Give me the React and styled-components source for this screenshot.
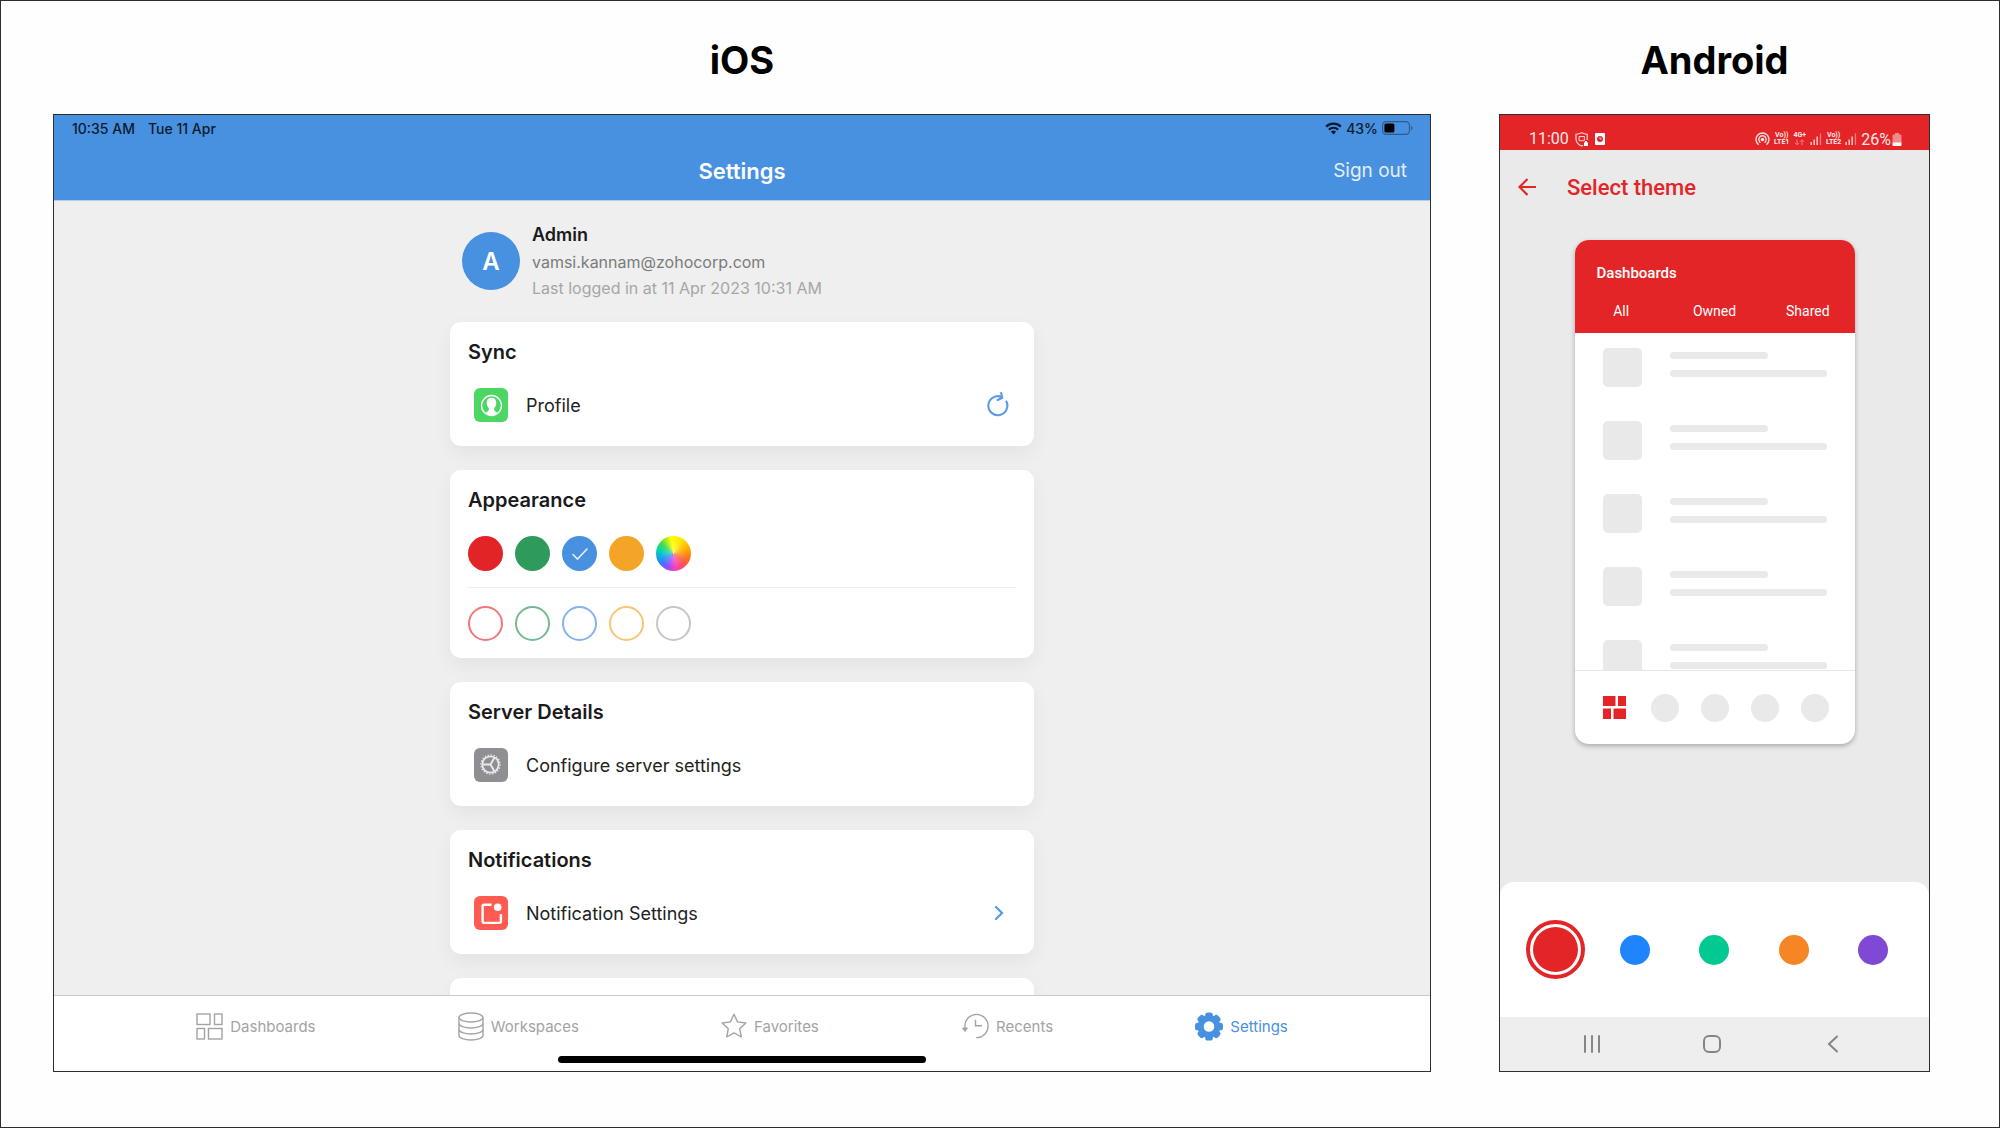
import React, { useState } from 'react'
import styled, { createGlobalStyle } from 'styled-components'

const colors = {
  frame: `#2e2e30`,
  blue: `#4890e0`,
  iosBody: `#efefef`,
  red: `#e32527`,
  androidBody: `#eaeaea`,
  skeleton: `#e9e9e9`,
  ink: `#1a1a1c`,
  muted: `#a3a3a3`,
}

const swatches = [
  { name: `Red`, value: `#e32427` },
  { name: `Green`, value: `#2e9a5c` },
  { name: `Blue`, value: `#4890e0` },
  { name: `Orange`, value: `#f4a527` },
  {
    name: `Multicolor`,
    value: `radial-gradient(circle, rgba(255, 255, 255, 0.35), transparent 55%), conic-gradient(#fffb00, #ffe600 30deg, #ff9500 85deg, #ff5a3c 125deg, #ff3fb4 170deg, #8a4fff 205deg, #1e8bff 240deg, #00d2b4 280deg, #3ddc4a 310deg, #fffb00 350deg)`,
  },
]

const outlines = [
  { name: `Red outline`, value: `#f0787a` },
  { name: `Green outline`, value: `#74b992` },
  { name: `Blue outline`, value: `#84b3ee` },
  { name: `Orange outline`, value: `#f8c476` },
  { name: `Grey outline`, value: `#c6c6c6` },
]

const androidThemes = [
  { name: `Red`, value: colors.red },
  { name: `Blue`, value: `#1f85ff` },
  { name: `Green`, value: `#02c892` },
  { name: `Orange`, value: `#f58525` },
  { name: `Purple`, value: `#7f49d6` },
]

export default function App() {
  return (
    <Page>
      <GlobalStyle />
      <Device>
        <Heading>iOS</Heading>
        <IosSettings />
      </Device>
      <Device>
        <Heading>Android</Heading>
        <AndroidThemes />
      </Device>
    </Page>
  )
}

function IosSettings() {
  const [theme, setTheme] = useState(`Blue`)
  const [tab, setTab] = useState(`Settings`)

  return (
    <Screen>
      <IosHeader>
        <IosStatus>
          <StatusGroup>
            <span>10:35 AM</span>
            <span>Tue 11 Apr</span>
          </StatusGroup>
          <StatusGroup tight>
            <WifiIcon />
            <span>43%</span>
            <IosBattery />
          </StatusGroup>
        </IosStatus>
        <IosNav>
          <IosTitle>Settings</IosTitle>
          <SignOut type='button'>Sign out</SignOut>
        </IosNav>
      </IosHeader>
      <IosBody>
        <Column>
          <Profile>
            <Avatar>A</Avatar>
            <div>
              <ProfileName>Admin</ProfileName>
              <ProfileMail>vamsi.kannam@zohocorp.com</ProfileMail>
              <ProfileLogin>Last logged in at 11 Apr 2023 10:31 AM</ProfileLogin>
            </div>
          </Profile>
          <Cards>
            <Card>
              <CardTitle>Sync</CardTitle>
              <Row type='button'>
                <ProfileIcon />
                <RowLabel>Profile</RowLabel>
                <RefreshIcon />
              </Row>
            </Card>
            <Card short>
              <CardTitle>Appearance</CardTitle>
              <SwatchRow>
                {swatches.map(({ name, value }) => (
                  <Swatch key={name}>
                    <SwatchInput
                      type='radio'
                      name='ios-theme'
                      aria-label={name}
                      fill={value}
                      checked={theme === name}
                      onChange={() => setTheme(name)}
                    />
                    {theme === name && <CheckIcon />}
                  </Swatch>
                ))}
              </SwatchRow>
              <Divider />
              <SwatchRow outlined>
                {outlines.map(({ name, value }) => (
                  <Swatch key={name}>
                    <SwatchInput
                      type='radio'
                      name='ios-theme'
                      aria-label={name}
                      outline={value}
                      checked={theme === name}
                      onChange={() => setTheme(name)}
                    />
                  </Swatch>
                ))}
              </SwatchRow>
            </Card>
            <Card>
              <CardTitle>Server Details</CardTitle>
              <Row type='button'>
                <ServerIcon />
                <RowLabel>Configure server settings</RowLabel>
              </Row>
            </Card>
            <Card>
              <CardTitle>Notifications</CardTitle>
              <Row type='button'>
                <NotificationIcon />
                <RowLabel>Notification Settings</RowLabel>
                <ChevronIcon />
              </Row>
            </Card>
            <Card />
          </Cards>
        </Column>
      </IosBody>
      <TabBar>
        <Tabs>
          {iosTabs.map(({ name, Icon }) => (
            <Tab
              key={name}
              type='button'
              active={tab === name}
              onClick={() => setTab(name)}
            >
              <Icon />
              {name}
            </Tab>
          ))}
        </Tabs>
        <HomeIndicator />
      </TabBar>
    </Screen>
  )
}

function AndroidThemes() {
  const [accent, setAccent] = useState(colors.red)

  return (
    <AndroidScreen>
      <AndroidStatus accent={accent}>
        <AndroidGroup>
          <Clock>11:00</Clock>
          <ShieldIcon />
          <AlarmIcon accent={accent} />
        </AndroidGroup>
        <AndroidGroup tight>
          <HotspotIcon />
          <Carrier>
            <span>Vo))</span>
            <span>LTE1</span>
          </Carrier>
          <Carrier>
            <span>4G+</span>
            <DataArrows />
          </Carrier>
          <SignalIcon />
          <Carrier>
            <span>Vo))</span>
            <span>LTE2</span>
          </Carrier>
          <SignalIcon />
          <Charge>
            26%
            <AndroidBattery />
          </Charge>
        </AndroidGroup>
      </AndroidStatus>
      <AppBar accent={accent}>
        <BackButton type='button' aria-label='Back'>
          <ArrowIcon />
        </BackButton>
        <AppBarTitle>Select theme</AppBarTitle>
      </AppBar>
      <PreviewArea>
        <Preview>
          <PreviewHeader accent={accent}>
            <PreviewTitle>Dashboards</PreviewTitle>
            <PreviewTabs>
              <span>All</span>
              <span>Owned</span>
              <span>Shared</span>
            </PreviewTabs>
          </PreviewHeader>
          <PreviewList>
            {[1, 2, 3, 4, 5].map(n => (
              <PreviewItem key={n}>
                <Thumb />
                <Lines>
                  <Line width={98} />
                  <Line width={157} />
                </Lines>
              </PreviewItem>
            ))}
          </PreviewList>
          <PreviewNav>
            <GridIcon accent={accent} />
            <Dot />
            <Dot />
            <Dot />
            <Dot />
          </PreviewNav>
        </Preview>
      </PreviewArea>
      <Sheet>
        {androidThemes.map(({ name, value }) => (
          <ThemeInput
            key={name}
            type='radio'
            name='android-theme'
            aria-label={name}
            tone={value}
            checked={accent === value}
            onChange={() => setAccent(value)}
          />
        ))}
      </Sheet>
      <SystemNav>
        <SystemButton type='button' aria-label='Recent apps'>
          <svg width='18' height='18' viewBox='0 0 18 18'>
            <path
              d='M2 1v16M9 1v16M16 1v16'
              stroke='#858585'
              strokeWidth='2'
              strokeLinecap='round'
            />
          </svg>
        </SystemButton>
        <SystemButton type='button' aria-label='Home'>
          <svg width='20' height='20' viewBox='0 0 20 20'>
            <rect
              x='2'
              y='2'
              width='16'
              height='16'
              rx='5'
              fill='none'
              stroke='#858585'
              strokeWidth='2'
            />
          </svg>
        </SystemButton>
        <SystemButton type='button' aria-label='Back'>
          <svg width='12' height='18' viewBox='0 0 12 18'>
            <path
              d='M10 1.5L2 9l8 7.5'
              fill='none'
              stroke='#858585'
              strokeWidth='2'
              strokeLinecap='round'
            />
          </svg>
        </SystemButton>
      </SystemNav>
    </AndroidScreen>
  )
}

const WifiIcon = () => (
  <svg width='17' height='13' viewBox='0 0 17 13'>
    <g fill='none' stroke='#0d1c2c' strokeWidth='2.2'>
      <path d='M1.2 4.6a10.4 10.4 0 0 1 14.6 0' />
      <path d='M3.9 7.6a6.6 6.6 0 0 1 9.2 0' />
    </g>
    <path d='M8.5 12.6L5.9 9.8a3.8 3.8 0 0 1 5.2 0z' fill='#0d1c2c' />
  </svg>
)

const IosBattery = () => (
  <svg width='31' height='14' viewBox='0 0 31 14'>
    <rect
      x='0.6'
      y='0.6'
      width='26.8'
      height='12.8'
      rx='3.6'
      fill='none'
      stroke='#2d5a8c'
      strokeWidth='1.1'
    />
    <rect x='2.4' y='2.4' width='10' height='9.2' rx='1.6' fill='#000' />
    <path d='M29 4.8v4.6c1-.5 1.5-1.3 1.5-2.3S30 5.3 29 4.8z' fill='#2d5a8c' />
  </svg>
)

const ProfileIcon = () => (
  <svg width='34' height='34' viewBox='0 0 34 34'>
    <rect width='34' height='34' rx='6' fill='#4cd764' />
    <circle
      cx='17.5'
      cy='17.5'
      r='10'
      fill='none'
      stroke='#fff'
      strokeWidth='1.3'
    />
    <path
      d='M17.500 9.8c-3 0-4.800 2-4.800 4.900 0 2.700 1.100 4 1.900 5.300.6 1.100.3 2.500-.6 3.300-.7.6-1.700 1-2.300 1.500 1.500 1.500 3.600 2.300 5.800 2.300s4.300-.8 5.800-2.300c-.6-.5-1.600-.9-2.300-1.500-.9-.8-1.200-2.200-.6-3.300.8-1.300 1.900-2.600 1.900-5.300 0-2.900-1.800-4.900-4.800-4.900z'
      fill='#fff'
    />
  </svg>
)

const ServerIcon = () => (
  <svg width='34' height='34' viewBox='0 0 34 34'>
    <rect width='34' height='34' rx='6' fill='#8e8e93' />
    <g fill='none' stroke='#e9e9eb'>
      <circle cx='16.5' cy='16.5' r='8.2' strokeWidth='1.8' />
      <circle
        cx='16.5'
        cy='16.5'
        r='9.6'
        strokeWidth='1.2'
        strokeDasharray='1.4 1.6'
      />
      <path
        d='M8.5 16.5h8M16.5 16.5l4-7M16.5 16.5l4 7'
        strokeWidth='1.9'
      />
    </g>
  </svg>
)

const NotificationIcon = () => (
  <svg width='34' height='34' viewBox='0 0 34 34'>
    <rect width='34' height='34' rx='6' fill='#ff5b52' />
    <path
      d='M17.500 8.700H10a1.400 1.400 0 0 0-1.400 1.400V25.500a1.400 1.400 0 0 0 1.400 1.400H25.500a1.400 1.400 0 0 0 1.400-1.400V18'
      fill='none'
      stroke='#fff'
      strokeWidth='2.4'
    />
    <circle cx='23.7' cy='11.2' r='3.8' fill='#fff' />
  </svg>
)

const RefreshIcon = () => (
  <svg width='24' height='26' viewBox='0 0 24 26'>
    <path
      d='M15.500 4.900A9.500 9.500 0 1 0 20 8.800'
      fill='none'
      stroke='#5b9ae8'
      strokeWidth='2.1'
    />
    <path
      d='M15.200 1l1 4.800-4.600 2.200'
      fill='none'
      stroke='#5b9ae8'
      strokeWidth='2.1'
      strokeLinecap='round'
    />
  </svg>
)

const ChevronIcon = () => (
  <svg width='24' height='24' viewBox='0 0 24 24'>
    <path
      d='M10 6l6 6-6 6'
      fill='none'
      stroke='#5599ea'
      strokeWidth='2.2'
      strokeLinecap='round'
    />
  </svg>
)

const CheckIcon = () => (
  <svg width='18' height='14' viewBox='0 0 18 14'>
    <path
      d='M2 7.5L6.500 12 16 2'
      fill='none'
      stroke='#e6f0fb'
      strokeWidth='1.6'
      strokeLinecap='round'
    />
  </svg>
)

const DashboardsIcon = () => (
  <svg width='27' height='27' viewBox='0 0 27 27'>
    <g fill='none' stroke='currentColor' strokeWidth='1.4'>
      <rect x='1' y='1' width='13' height='10.5' />
      <rect x='18.5' y='1' width='7.5' height='10.5' />
      <rect x='1' y='15.5' width='7.5' height='10.5' />
      <rect x='12.5' y='15.5' width='13.5' height='10.5' />
    </g>
  </svg>
)

const WorkspacesIcon = () => (
  <svg width='26' height='29' viewBox='0 0 26 29'>
    <g fill='none' stroke='currentColor' strokeWidth='1.4'>
      <ellipse cx='13' cy='5.5' rx='12' ry='4.5' />
      <path d='M1 5.500v18c0 2.500 5.400 4.500 12 4.500s12-2 12-4.500v-18' />
      <path d='M1 11.500c0 2.500 5.400 4.500 12 4.500s12-2 12-4.500' />
      <path d='M1 17.500c0 2.500 5.400 4.500 12 4.500s12-2 12-4.500' />
    </g>
  </svg>
)

const FavoritesIcon = () => (
  <svg width='26' height='26' viewBox='0 0 26 26'>
    <path
      d='M13 1.300l3.500 7.600 8.300 1.100-6.100 5.700 1.600 8.300L13 19.900 5.700 24l1.600-8.300L1.200 10l8.300-1.100z'
      fill='none'
      stroke='currentColor'
      strokeWidth='1.4'
      strokeLinejoin='round'
    />
  </svg>
)

const RecentsIcon = () => (
  <svg width='28' height='26' viewBox='0 0 28 26'>
    <g fill='none' stroke='currentColor' strokeWidth='1.4'>
      <path d='M3.900 16V13a11.600 11.600 0 1 1 11.600 11.600' strokeLinecap='round' />
      <path d='M14.500 6.800v6H21' />
    </g>
    <path
      d='M1.600 15h4.800L4 18.400z'
      fill='currentColor'
      stroke='currentColor'
      strokeLinejoin='round'
    />
  </svg>
)

const SettingsIcon = () => (
  <svg width='28' height='29' viewBox='0 0 28 28'>
    <g fill='currentColor'>
      {[0, 45, 90, 135, 180, 225, 270, 315].map(angle => (
        <rect
          key={angle}
          x='10.2'
          y='0'
          width='7.6'
          height='8'
          rx='2.6'
          transform={`rotate(${angle} 14 14)`}
        />
      ))}
      <circle cx='14' cy='14' r='11.4' />
    </g>
    <circle cx='14' cy='14' r='5.3' fill='#fff' />
  </svg>
)

const iosTabs = [
  { name: `Dashboards`, Icon: DashboardsIcon },
  { name: `Workspaces`, Icon: WorkspacesIcon },
  { name: `Favorites`, Icon: FavoritesIcon },
  { name: `Recents`, Icon: RecentsIcon },
  { name: `Settings`, Icon: SettingsIcon },
]

const ShieldIcon = () => (
  <svg width='14' height='15' viewBox='0 0 14 15'>
    <path
      d='M8 13.200l-1.400.8C3 12.500 1 10.500 1 7V2.300C3 2.200 5 1.600 6.600.8 8.200 1.600 10 2.200 12.200 2.300V8'
      fill='none'
      stroke='#f9d3d3'
      strokeWidth='1.2'
    />
    <path
      d='M4 4.500h5.400v4.200H4zM5.400 6.600h.1M7.900 6.600h.1'
      fill='none'
      stroke='#f9d3d3'
    />
    <path d='M9 10.500h1V9h2v1.500h1V14H9z' fill='#fff' />
  </svg>
)

const AlarmIcon = ({ accent }) => (
  <svg width='10' height='12' viewBox='0 0 10 12'>
    <rect width='10' height='12' rx='1' fill='#fff' />
    <circle cx='5' cy='6' r='3' fill={accent} />
    <path d='M5 4.200V6h1.600' fill='none' stroke='#fff' strokeWidth='0.8' />
  </svg>
)

const HotspotIcon = () => (
  <svg width='15' height='14' viewBox='0 0 15 14'>
    <g fill='none' stroke='#fbdcdc' strokeWidth='1.4' strokeLinecap='round'>
      <path d='M3.200 12.300a6.500 6.500 0 1 1 8.600 0' />
      <path d='M5 10.200a3.700 3.700 0 1 1 5 0' />
    </g>
    <circle cx='7.5' cy='7.6' r='1.7' fill='#fff' />
  </svg>
)

const DataArrows = () => (
  <svg width='11' height='7' viewBox='0 0 11 7'>
    <path
      d='M3 .5v5M1 3.800l2 2 2-2M8 6.200V1M6 2.800l2-2 2 2'
      fill='none'
      stroke='#f08a8b'
      strokeWidth='0.9'
    />
  </svg>
)

const SignalIcon = () => (
  <svg width='12' height='12' viewBox='0 0 12 12'>
    <g fill='#fbdcdc'>
      <rect x='0.5' y='9' width='1.3' height='3' />
      <rect x='3.5' y='6.5' width='1.3' height='5.5' />
      <rect x='6.5' y='3.5' width='1.3' height='8.5' />
      <rect x='9.8' y='0.5' width='1.3' height='11.5' opacity='0.5' />
    </g>
  </svg>
)

const AndroidBattery = () => (
  <svg width='10' height='13' viewBox='0 0 10 13'>
    <path
      d='M3 0h4v1.500h1.500A1 1 0 0 1 9.500 2.500V10H.5V2.500a1 1 0 0 1 1-1H3z'
      fill='#f08a8b'
    />
    <path d='M.5 9.500h9V12a1 1 0 0 1-1 1h-7a1 1 0 0 1-1-1z' fill='#fff' />
  </svg>
)

const ArrowIcon = () => (
  <svg width='18' height='18' viewBox='0 0 18 18'>
    <path
      d='M18 9H1.500M9.500 1l-8 8 8 8'
      fill='none'
      stroke='currentColor'
      strokeWidth='2.2'
    />
  </svg>
)

const GridIcon = ({ accent }) => (
  <svg width='23' height='23' viewBox='0 0 23 23'>
    <path
      d='M0 0h12.500v10H0zM15 0h8v10h-8zM0 12.500h8V23H0zM10.500 12.500H23V23H10.500z'
      fill={accent}
    />
  </svg>
)

// keeps styling props off the dom nodes
const own = (...names) => ({
  shouldForwardProp: prop => !names.includes(prop),
})

const GlobalStyle = createGlobalStyle`
  *, *::before, *::after {
    box-sizing: border-box;
  }
  body {
    margin: 0;
    background: #fefefe;
    font-family: Inter, 'Liberation Sans', sans-serif;
    color: ${colors.ink};
  }
  h1, h2, h3, p {
    margin: 0;
  }
  button {
    padding: 0;
    border: none;
    background: none;
    font: inherit;
    color: inherit;
    cursor: pointer;
  }
  svg {
    display: block;
    flex-shrink: 0;
  }
`

const Page = styled.main`
  min-height: 100vh;
  display: grid;
  grid-template-columns: minmax(0, 1378fr) minmax(0, 431fr);
  gap: 68px;
  padding: 0 69px 55px 52px;
  border: 1px solid ${colors.frame};
`

const Device = styled.section`
  display: flex;
  flex-direction: column;
`

const Heading = styled.h1`
  padding: 35px 0 30px;
  font-size: 38px;
  line-height: 48px;
  font-weight: 700;
  text-align: center;
  color: #000;
`

const Screen = styled.div`
  flex: 1;
  display: flex;
  flex-direction: column;
  border: 1px solid ${colors.frame};
`

const IosHeader = styled.header`
  background: ${colors.blue};
  border-bottom: 1px solid #b7cde6;
`

const IosStatus = styled.div`
  display: flex;
  justify-content: space-between;
  align-items: center;
  height: 26px;
  padding: 0 17px 0 18px;
  font-size: 14px;
  font-weight: 500;
  color: #0d1c2c;
`

const StatusGroup = styled.div.withConfig(own('tight'))`
  display: flex;
  align-items: center;
  gap: ${({ tight }) => (tight ? `4px` : `13px`)};
`

const IosNav = styled.div`
  display: grid;
  grid-template-columns: 1fr auto 1fr;
  align-items: center;
  height: 59px;
  padding: 0 23px;
`

const IosTitle = styled.h2`
  grid-column: 2;
  font-size: 22px;
  font-weight: 600;
  color: #fff;
`

const SignOut = styled.button`
  justify-self: end;
  && {
    font-size: 19px;
    color: #e4eefa;
  }
`

const IosBody = styled.div`
  flex: 1 1 0;
  min-height: 0;
  overflow: hidden;
  background: ${colors.iosBody};
`

const Column = styled.div`
  max-width: 584px;
  margin: 0 auto;
  padding-top: 20px;
`

const Profile = styled.div`
  display: flex;
  align-items: center;
  gap: 12px;
  padding: 0 12px;
  margin-bottom: 21px;
`

const Avatar = styled.div`
  display: grid;
  place-items: center;
  width: 58px;
  height: 58px;
  border-radius: 50%;
  background: ${colors.blue};
  font-size: 24px;
  font-weight: 600;
  color: #fff;
`

const ProfileName = styled.h3`
  font-size: 18px;
  line-height: 28px;
  font-weight: 600;
`

const ProfileMail = styled.p`
  font-size: 16px;
  line-height: 26px;
  color: #7b7b7b;
`

const ProfileLogin = styled(ProfileMail)`
  color: #a6a6a6;
`

const Cards = styled.div`
  display: flex;
  flex-direction: column;
  gap: 24px;
`

const Card = styled.section.withConfig(own('short'))`
  min-height: 124px;
  padding: ${({ short }) => (short ? `18px 18px 17px` : `18px 18px 24px`)};
  border-radius: 11px;
  background: #fff;
  box-shadow: 0 8px 20px rgba(0, 0, 0, 0.05);
`

const CardTitle = styled.h3`
  margin-bottom: 24px;
  font-size: 20px;
  line-height: 24px;
  font-weight: 600;
`

const Row = styled.button`
  display: flex;
  align-items: center;
  gap: 18px;
  width: 100%;
  && {
    padding: 0 6px;
  }
`

const RowLabel = styled.span`
  flex: 1;
  font-size: 18px;
  text-align: left;
  color: #222;
`

const SwatchRow = styled.div.withConfig(own('outlined'))`
  display: flex;
  gap: 12px;
  padding-top: ${({ outlined }) => (outlined ? `18px` : `0`)};
`

const Swatch = styled.label`
  display: grid;
  place-items: center;
  cursor: pointer;
  & > * {
    grid-area: 1 / 1;
  }
  & svg {
    z-index: 1;
  }
`

const SwatchInput = styled.input.withConfig(own('fill', 'outline'))`
  appearance: none;
  width: 35px;
  height: 35px;
  margin: 0;
  border-radius: 50%;
  cursor: pointer;
  background: ${({ fill }) => fill || `transparent`};
  border: ${({ outline }) => (outline ? `2px solid ${outline}` : `none`)};
`

const Divider = styled.hr`
  height: 1px;
  margin: 16px 0 0;
  border: none;
  background: #efefef;
`

const TabBar = styled.footer`
  display: flex;
  flex-direction: column;
  align-items: center;
  border-top: 1px solid #c9c9c9;
  padding-bottom: 8px;
  background: #fff;
`

const Tabs = styled.nav`
  display: flex;
  justify-content: space-evenly;
  align-items: center;
  width: 100%;
  height: 60px;
`

const Tab = styled.button.withConfig(own('active'))`
  display: flex;
  align-items: center;
  gap: 7px;
  && {
    font-size: 15px;
    color: ${({ active }) => (active ? colors.blue : colors.muted)};
  }
`

const HomeIndicator = styled.div`
  width: 368px;
  max-width: 60%;
  height: 7px;
  border-radius: 4px;
  background: #000;
`

const AndroidScreen = styled(Screen)`
  background: ${colors.androidBody};
  font-family: Roboto, 'Liberation Sans', sans-serif;
`

const AndroidStatus = styled.div.withConfig(own('accent'))`
  display: flex;
  justify-content: space-between;
  align-items: center;
  height: 35px;
  padding: 13px 27px 0 29px;
  background: ${({ accent }) => accent};
  font-size: 16px;
  color: #fde9e9;
`

const AndroidGroup = styled.div.withConfig(own('tight'))`
  display: flex;
  align-items: center;
  gap: ${({ tight }) => (tight ? `4px` : `6px`)};
`

const Clock = styled.span`
  line-height: 20px;
`

const Carrier = styled.div`
  display: flex;
  flex-direction: column;
  align-items: center;
  font-size: 7px;
  line-height: 7px;
  font-weight: 700;
`

const Charge = styled.div`
  display: flex;
  align-items: center;
  gap: 1px;
`

const AppBar = styled.header.withConfig(own('accent'))`
  display: flex;
  align-items: center;
  gap: 31px;
  height: 74px;
  padding: 0 18px;
  color: ${({ accent }) => accent};
`

const BackButton = styled.button`
  width: 18px;
`

const AppBarTitle = styled.h2`
  font-size: 22px;
  font-weight: 500;
`

const PreviewArea = styled.div`
  flex: 1;
  padding: 16px 16px 40px;
`

const Preview = styled.div`
  max-width: 280px;
  margin: 0 auto;
  overflow: hidden;
  border-radius: 14px;
  background: #fff;
  box-shadow: 0 2px 5px rgba(0, 0, 0, 0.28);
`

const PreviewHeader = styled.div.withConfig(own('accent'))`
  padding: 22px 0 11px;
  background: ${({ accent }) => accent};
  line-height: 22px;
  color: #fff;
`

const PreviewTitle = styled.h3`
  margin: 0 0 16px 22px;
  font-size: 15px;
  font-weight: 500;
`

const PreviewTabs = styled.div`
  display: grid;
  grid-template-columns: repeat(3, 1fr);
  font-size: 14px;
  text-align: center;
`

const PreviewList = styled.ul`
  display: flex;
  flex-direction: column;
  gap: 34px;
  height: 337px;
  margin: 0;
  padding: 15px 28px 0;
  overflow: hidden;
  list-style: none;
`

const PreviewItem = styled.li`
  display: flex;
  gap: 28px;
`

const Thumb = styled.div`
  flex-shrink: 0;
  width: 39px;
  height: 39px;
  border-radius: 5px;
  background: ${colors.skeleton};
`

const Lines = styled.div`
  display: flex;
  flex-direction: column;
  gap: 11px;
  padding-top: 4px;
`

const Line = styled.div.withConfig(own('width'))`
  width: ${({ width }) => width}px;
  height: 7px;
  border-radius: 4px;
  background: ${colors.skeleton};
`

const PreviewNav = styled.div`
  display: grid;
  grid-template-columns: repeat(5, 1fr);
  place-items: center;
  height: 74px;
  padding: 0 15px;
  border-top: 1px solid #e6e6e6;
`

const Dot = styled.span`
  width: 28px;
  height: 28px;
  border-radius: 50%;
  background: ${colors.skeleton};
`

const Sheet = styled.div`
  display: grid;
  grid-template-columns: repeat(5, 1fr);
  place-items: center;
  height: 135px;
  padding: 0 16px;
  border-radius: 14px 14px 0 0;
  background: #fff;
`

const ThemeInput = styled.input.withConfig(own('tone'))`
  appearance: none;
  width: 30px;
  height: 30px;
  margin: 0;
  border-radius: 50%;
  background: ${({ tone }) => tone};
  cursor: pointer;
  &:checked {
    width: 59px;
    height: 59px;
    padding: 3px;
    border: 4px solid ${({ tone }) => tone};
    background-clip: content-box;
  }
`

const SystemNav = styled.nav`
  display: grid;
  grid-template-columns: repeat(3, 1fr);
  height: 54px;
  padding: 0 36px 0 32px;
  background: #eee;
`

const SystemButton = styled.button`
  display: grid;
  place-items: center;
`
